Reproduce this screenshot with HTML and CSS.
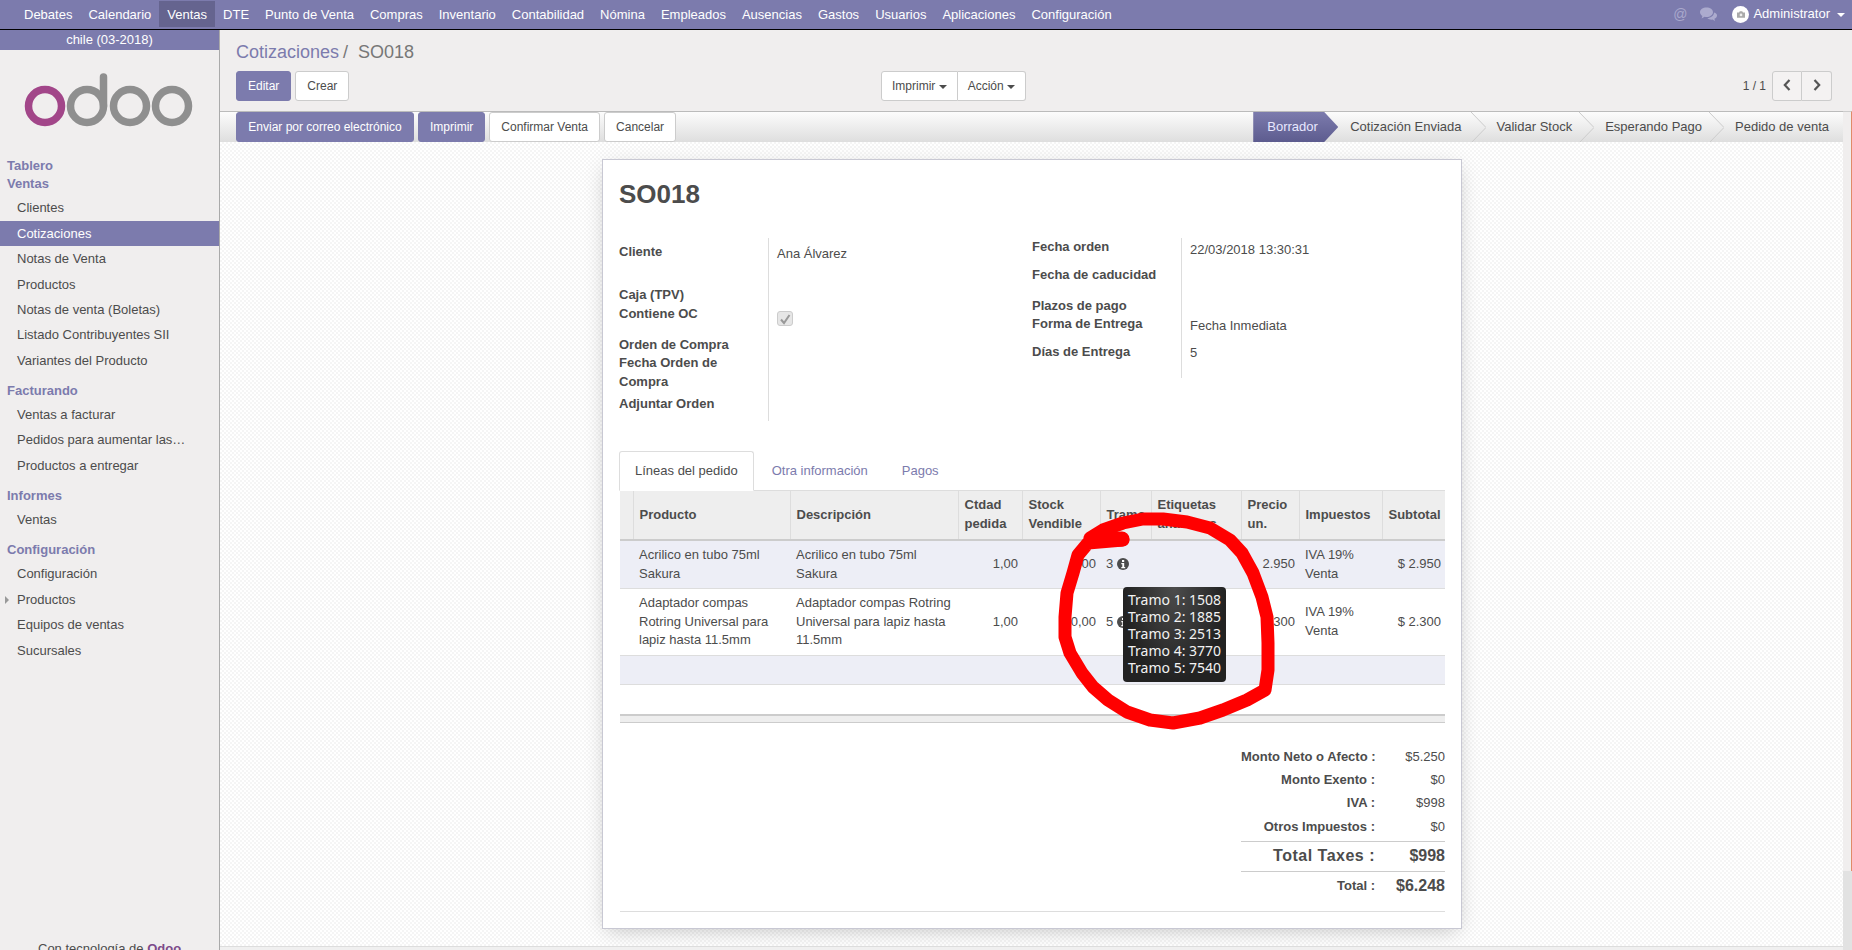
FILE: index.html
```html
<!DOCTYPE html>
<html lang="es">
<head>
    <meta charset="UTF-8">
    <title>SO018 - Odoo</title>
    <link rel="stylesheet" href="styles.css">
</head>
<body>

<nav class="topbar">
    <ul class="topmenu">
        <li>Debates</li>
        <li>Calendario</li>
        <li class="active">Ventas</li>
        <li>DTE</li>
        <li>Punto de Venta</li>
        <li>Compras</li>
        <li>Inventario</li>
        <li>Contabilidad</li>
        <li>Nómina</li>
        <li>Empleados</li>
        <li>Ausencias</li>
        <li>Gastos</li>
        <li>Usuarios</li>
        <li>Aplicaciones</li>
        <li>Configuración</li>
    </ul>
    <div class="topright">
        <span class="top-at">@</span>
        <svg class="top-chat" viewBox="0 0 17 15" width="17" height="15">
            <path d="M6.5 0.5C2.9 0.5 0 2.6 0 5.2c0 1.5 1 2.8 2.4 3.7L1.6 11.5l3-1.7c.6.1 1.2.2 1.9.2 3.6 0 6.5-2.2 6.5-4.8S10.100.5 6.5.5z" fill="#acabce"/>
            <path d="M14 5.500c.1 3-2.900 5.400-6.700 5.600 1 1 2.600 1.600 4.300 1.600l.9-.1 2.500 1.400-.6-2.200c1.600-.8 2.600-2 2.600-3.400 0-1.200-1-2.300-3-2.900z" fill="#acabce"/>
        </svg>
        <span class="avatar">
            <svg viewBox="0 0 10 8" width="8" height="7"><path d="M0 1.500h2.500L3.500 0h3l1 1.500H10V8H0z" fill="#aaa"/><circle cx="5" cy="4.500" r="1.700" fill="#eee"/></svg>
        </span>
        <span class="top-user">Administrator</span>
        <span class="caret caret-white"></span>
    </div>
</nav>

<div class="layout">
    <aside class="sidebar">
        <div class="company">chile (03-2018)</div>
        <svg class="logo" viewBox="0 0 219 107" width="219" height="107">
            <circle cx="45" cy="56" r="16.500" fill="none" stroke="#a24689" stroke-width="7.500"/>
            <circle cx="87" cy="56" r="16.500" fill="none" stroke="#8f8f8f" stroke-width="7.500"/>
            <path d="M103.500 56V27" fill="none" stroke="#8f8f8f" stroke-width="7.500" stroke-linecap="round"/>
            <circle cx="130" cy="56" r="16.500" fill="none" stroke="#8f8f8f" stroke-width="7.500"/>
            <circle cx="172" cy="56" r="16.500" fill="none" stroke="#8f8f8f" stroke-width="7.500"/>
        </svg>
        <div class="menu-head">Tablero</div>
        <div class="menu-head">Ventas</div>
        <ul class="menu menu-first">
            <li>Clientes</li>
            <li class="selected">Cotizaciones</li>
            <li>Notas de Venta</li>
            <li>Productos</li>
            <li>Notas de venta (Boletas)</li>
            <li>Listado Contribuyentes SII</li>
            <li>Variantes del Producto</li>
        </ul>
        <div class="menu-head section">Facturando</div>
        <ul class="menu">
            <li>Ventas a facturar</li>
            <li>Pedidos para aumentar las…</li>
            <li>Productos a entregar</li>
        </ul>
        <div class="menu-head section">Informes</div>
        <ul class="menu">
            <li>Ventas</li>
        </ul>
        <div class="menu-head section">Configuración</div>
        <ul class="menu">
            <li>Configuración</li>
            <li class="has-sub">Productos</li>
            <li>Equipos de ventas</li>
            <li>Sucursales</li>
        </ul>
        <div class="powered">Con tecnología de <b>Odoo</b></div>
    </aside>

    <main class="main">
        <header class="control">
            <div class="breadcrumb"><a>Cotizaciones</a><span class="slash">/</span><span class="crumb-now">SO018</span></div>
            <div class="control-row">
                <div class="control-left">
                    <button class="btn primary">Editar</button>
                    <button class="btn">Crear</button>
                </div>
                <div class="btn-group">
                    <button class="btn">Imprimir <span class="caret"></span></button>
                    <button class="btn">Acción <span class="caret"></span></button>
                </div>
                <div class="pager">
                    <span class="pager-count">1 / 1</span>
                    <div class="pager-btns">
                        <button class="btn pager-btn">
                            <svg viewBox="0 0 8 12" width="8" height="12"><path d="M6.500 1L1.800 6l4.700 5" fill="none" stroke="#555" stroke-width="2.200"/></svg>
                        </button>
                        <button class="btn pager-btn">
                            <svg viewBox="0 0 8 12" width="8" height="12"><path d="M1.500 1l4.700 5-4.700 5" fill="none" stroke="#555" stroke-width="2.200"/></svg>
                        </button>
                    </div>
                </div>
            </div>
        </header>

        <div class="workspace">
            <div class="form-view">
                <div class="statusbar">
                    <div class="actions">
                        <button class="btn primary btn-send">Enviar por correo electrónico</button>
                        <button class="btn primary">Imprimir</button>
                        <button class="btn">Confirmar Venta</button>
                        <button class="btn">Cancelar</button>
                    </div>
                    <div class="steps">
                        <span class="step-current">Borrador</span>
                        <span class="step step-second">Cotización Enviada</span>
                        <svg class="chev" viewBox="0 0 15 31" width="15" height="31"><path d="M0 0l15 15.500L0 31" fill="none" stroke="#ccc"/></svg>
                        <span class="step">Validar Stock</span>
                        <svg class="chev" viewBox="0 0 15 31" width="15" height="31"><path d="M0 0l15 15.500L0 31" fill="none" stroke="#ccc"/></svg>
                        <span class="step">Esperando Pago</span>
                        <svg class="chev" viewBox="0 0 15 31" width="15" height="31"><path d="M0 0l15 15.500L0 31" fill="none" stroke="#ccc"/></svg>
                        <span class="step step-last">Pedido de venta</span>
                    </div>
                </div>

                <div class="sheet-bg">
                    <div class="sheet">
                        <h1>SO018</h1>

                        <div class="groups">
                            <div class="group group-left">
                                <div class="lbl pad5">Cliente</div><div class="val pad7">Ana Álvarez</div>
                                <div class="lbl">Caja (TPV)</div><div class="val"></div>
                                <div class="lbl">Contiene OC</div><div class="val"><span class="check">
                                    <svg viewBox="0 0 12 12" width="12" height="12"><path d="M2 6.500l3 3.500 5.500-8" fill="none" stroke="#999" stroke-width="2"/></svg>
                                </span></div>
                                <div class="lbl">Orden de Compra</div><div class="val"></div>
                                <div class="lbl">Fecha Orden de Compra</div><div class="val"></div>
                                <div class="lbl">Adjuntar Orden</div><div class="val"></div>
                            </div>
                            <div class="group group-right">
                                <div class="lbl">Fecha orden</div><div class="val pad3">22/03/2018 13:30:31</div>
                                <div class="lbl">Fecha de caducidad</div><div class="val"></div>
                                <div class="lbl">Plazos de pago</div><div class="val"></div>
                                <div class="lbl">Forma de Entrega</div><div class="val pad2">Fecha Inmediata</div>
                                <div class="lbl">Días de Entrega</div><div class="val pad1">5</div>
                            </div>
                        </div>

                        <ul class="tabs">
                            <li class="tab-active">Líneas del pedido</li>
                            <li>Otra información</li>
                            <li>Pagos</li>
                        </ul>

                        <table class="lines">
                            <colgroup>
                                <col class="c-handle"><col class="c-prod"><col class="c-desc"><col class="c-qty"><col class="c-stock">
                                <col class="c-tramo"><col class="c-tags"><col class="c-price"><col class="c-tax"><col class="c-sub">
                            </colgroup>
                            <thead>
                                <tr>
                                    <th></th>
                                    <th>Producto</th>
                                    <th>Descripción</th>
                                    <th>Ctdad pedida</th>
                                    <th>Stock Vendible</th>
                                    <th>Tramo</th>
                                    <th>Etiquetas analíticas</th>
                                    <th>Precio un.</th>
                                    <th>Impuestos</th>
                                    <th>Subtotal</th>
                                </tr>
                            </thead>
                            <tbody>
                                <tr class="odd">
                                    <td></td>
                                    <td>Acrilico en tubo 75ml Sakura</td>
                                    <td>Acrilico en tubo 75ml Sakura</td>
                                    <td class="num">1,00</td>
                                    <td class="num">0,00</td>
                                    <td class="tramo">3 <svg class="info" viewBox="0 0 12 12" width="12" height="12"><circle cx="6" cy="6" r="6" fill="#4c4c4c"/><rect x="5" y="2" width="2.200" height="2" fill="#fff"/><path d="M4.300 5h2.900v4h1v1.200H4.300V9h1V6.200h-1z" fill="#fff"/></svg></td>
                                    <td></td>
                                    <td class="num">2.950</td>
                                    <td>IVA 19% Venta</td>
                                    <td class="num">$ 2.950</td>
                                </tr>
                                <tr>
                                    <td></td>
                                    <td>Adaptador compas Rotring Universal para lapiz hasta 11.5mm</td>
                                    <td>Adaptador compas Rotring Universal para lapiz hasta 11.5mm</td>
                                    <td class="num">1,00</td>
                                    <td class="num">0,00</td>
                                    <td class="tramo">5 <svg class="info" viewBox="0 0 12 12" width="12" height="12"><circle cx="6" cy="6" r="6" fill="#4c4c4c"/><rect x="5" y="2" width="2.200" height="2" fill="#fff"/><path d="M4.300 5h2.900v4h1v1.200H4.300V9h1V6.200h-1z" fill="#fff"/></svg></td>
                                    <td></td>
                                    <td class="num">2.300</td>
                                    <td>IVA 19% Venta</td>
                                    <td class="num">$ 2.300</td>
                                </tr>
                                <tr class="odd empty"><td colspan="10"></td></tr>
                            </tbody>
                        </table>
                        <div class="table-foot"></div>

                        <div class="totals">
                            <div class="t-lbl">Monto Neto o Afecto :</div><div class="t-val">$5.250</div>
                            <div class="t-lbl">Monto Exento :</div><div class="t-val">$0</div>
                            <div class="t-lbl">IVA :</div><div class="t-val">$998</div>
                            <div class="t-lbl">Otros Impuestos :</div><div class="t-val">$0</div>
                            <div class="t-lbl t-big t-line">Total Taxes :</div><div class="t-val t-big t-line">$998</div>
                            <div class="t-lbl t-line">Total :</div><div class="t-val t-big t-line">$6.248</div>
                        </div>
                        <div class="sheet-rule"></div>
                    </div>
                </div>
                <div class="form-foot"></div>
            </div>
            <div class="scrollbar"><div class="thumb"></div></div>
        </div>
    </main>
</div>

<!-- marker circle somebody drew over the screenshot -->
<svg class="scribble" viewBox="0 0 1852 950" width="1852" height="950">
    <polyline fill="none" stroke="#ff0000" stroke-width="13" stroke-linejoin="round" stroke-linecap="round"
        points="1123,540 1088,543 1078,555 1073,573 1067,593 1065,617 1065,637 1070,653 1082,673 1093,687 1108,700 1127,712 1150,720 1173,723 1200,718 1223,710 1247,700 1265,690 1268,670 1268,643 1267,617 1262,597 1253,573 1242,553 1230,540 1210,528 1187,522 1163,519 1143,519 1123,523 1103,530 1090,538"/>
    <path d="M1092 540L1122 539" fill="none" stroke="#ff0000" stroke-width="15" stroke-linecap="round"/>
</svg>

<div class="tooltip">
    Tramo 1: 1508<br>
    Tramo 2: 1885<br>
    Tramo 3: 2513<br>
    Tramo 4: 3770<br>
    Tramo 5: 7540
</div>

</body>
</html>
```

FILE: styles.css
```css
* {
    box-sizing: border-box;
}
html, body {
    margin: 0;
    height: 950px;
    overflow: hidden;
}
body {
    font-family: "Liberation Sans", Arial, sans-serif;
    font-size: 13px;
    line-height: 18.57px;
    color: #4c4c4c;
    background: #fff;
    position: relative;
}
ul {
    list-style: none;
    margin: 0;
    padding: 0;
}

/* top bar */
.topbar {
    height: 30px;
    background: #7c7bad;
    border-bottom: 1px solid #000;
    display: flex;
    justify-content: space-between;
    color: #fff;
}
.topmenu {
    display: flex;
    padding: 1px 0 0 16px;
}
.topmenu li {
    height: 26px;
    line-height: 27px;
    padding: 0 8px;
    white-space: nowrap;
}
.topmenu .active {
    background: #65648f;
}
.topright {
    display: flex;
    align-items: center;
    padding-right: 7px;
}
.top-at {
    color: #a9a8cc;
    font-size: 14px;
    margin-right: 13px;
}
.top-chat {
    margin-right: 15px;
}
.avatar {
    width: 17px;
    height: 17px;
    border-radius: 50%;
    background: #fff;
    display: flex;
    align-items: center;
    justify-content: center;
    margin-right: 4px;
}
.top-user {
    margin-right: 7px;
}
.caret {
    display: inline-block;
    width: 0;
    height: 0;
    border-left: 4px solid transparent;
    border-right: 4px solid transparent;
    border-top: 4px solid #4c4c4c;
    vertical-align: middle;
}
.caret-white {
    border-top-color: #fff;
}

.layout {
    display: flex;
    height: 920px;
}

/* left menu */
.sidebar {
    width: 220px;
    flex: none;
    background: #f0eeee;
    border-right: 1px solid #aaa;
    overflow: hidden;
}
.company {
    height: 20px;
    line-height: 20px;
    background: #7c7bad;
    color: #fff;
    text-align: center;
}
.logo {
    display: block;
}
.menu-head {
    height: 18px;
    line-height: 18px;
    padding-left: 7px;
    font-weight: bold;
    color: #7c7bad;
}
.menu-head.section {
    margin-top: 8.500px;
}
.menu {
    margin-top: 2.400px;
}
.menu li {
    height: 25.400px;
    line-height: 25px;
    padding-left: 17px;
    white-space: nowrap;
    position: relative;
}
.menu .selected {
    background: #7c7bad;
    color: #fff;
}
.menu .has-sub::before {
    content: "";
    position: absolute;
    left: 5px;
    top: 9px;
    border-left: 4px solid #999;
    border-top: 4px solid transparent;
    border-bottom: 4px solid transparent;
}
.powered {
    margin-top: 277px;
    padding-left: 38px;
    white-space: nowrap;
}
.powered b {
    color: #7c4a8a;
}

.main {
    flex: 1;
    min-width: 0;
    display: flex;
    flex-direction: column;
}

/* control panel */
.control {
    height: 81px;
    flex: none;
    background: #f0eeee;
    padding: 9px 20px 0 16px;
}
.breadcrumb {
    font-size: 18px;
    line-height: 26px;
    height: 32px;
    white-space: nowrap;
}
.breadcrumb a {
    color: #7c7bad;
}
.slash {
    color: #777;
    margin: 0 10px 0 4px;
}
.crumb-now {
    color: #777;
}
.control-row {
    display: flex;
    align-items: center;
}
.control-left {
    width: 645px;
    display: flex;
    gap: 4px;
}
.btn {
    height: 30px;
    padding: 0 11px;
    border: 1px solid #ccc;
    border-radius: 3px;
    background: #fff;
    color: #4c4c4c;
    font-family: inherit;
    font-size: 12px;
    white-space: nowrap;
}
.btn.primary {
    background: #7c7bad;
    border-color: #7c7bad;
    color: #fff;
}
.btn-send {
    width: 178px;
}
.btn-group {
    display: flex;
}
.btn-group .btn {
    padding: 0 10px;
}
.btn-group .btn:first-child {
    border-radius: 3px 0 0 3px;
}
.btn-group .btn:last-child {
    border-radius: 0 3px 3px 0;
    border-left: 0;
}
.pager {
    margin-left: auto;
    display: flex;
    align-items: center;
}
.pager-count {
    margin-right: 6px;
    font-size: 12px;
}
.pager-btns {
    display: flex;
}
.pager-btn {
    width: 30px;
    padding: 0;
    background: #f4f2f2;
}
.pager-btn:first-child {
    border-radius: 3px 0 0 3px;
}
.pager-btn:last-child {
    border-radius: 0 3px 3px 0;
    border-left: 0;
}

.workspace {
    flex: 1;
    min-height: 0;
    display: flex;
}
.form-view {
    flex: 1;
    min-width: 0;
    display: flex;
    flex-direction: column;
}
.scrollbar {
    width: 9px;
    flex: none;
    background: #e2e2e2;
}
.thumb {
    height: 760px;
    background: #f0eeee;
    border-right: 1px solid #e08a68;
    border-top: 1px solid #ccc;
}

/* status bar */
.statusbar {
    height: 31px;
    flex: none;
    display: flex;
    justify-content: space-between;
    border-top: 1px solid #bbb;
    background: linear-gradient(#fcfcfc, #dedede);
    padding-left: 16px;
}
.actions {
    display: flex;
    gap: 4px;
}
.steps {
    display: flex;
    align-items: stretch;
    line-height: 30px;
}
.step-current {
    width: 85px;
    padding-left: 14px;
    color: #e8e8ff;
    background: linear-gradient(#7c7bad, #5d5c8f);
    clip-path: polygon(0 0, 71px 0, 100% 50%, 71px 100%, 0 100%);
}
.step {
    padding: 0 7px 0 11px;
    white-space: nowrap;
}
.step-second {
    padding: 0 9px 0 12px;
}
.step-last {
    padding-right: 14px;
}
.chev {
    flex: none;
}

/* sheet */
.sheet-bg {
    flex: 1;
    min-height: 0;
    padding: 17px 0 0 1px;
    background-color: #fff;
    background-image: repeating-conic-gradient(#f5f5f5 0 25%, #fff 0 50%);
    background-size: 4px 4px;
    overflow: hidden;
}
.sheet {
    width: 860px;
    height: 770px;
    margin: 0 auto;
    padding: 0 16px;
    background: #fff;
    border: 1px solid #c8c8d3;
    box-shadow: 0 5px 20px -5px rgba(0, 0, 0, 0.25);
}
.sheet h1 {
    margin: 0;
    padding-top: 20px;
    font-size: 26px;
    line-height: 29px;
    height: 78px;
    font-weight: bold;
}
.groups {
    display: flex;
    height: 213px;
}
.group {
    display: grid;
    grid-template-columns: 149px 1fr;
    align-content: start;
}
.group-left {
    width: 413px;
    grid-template-rows: 48px 19px 31px 18px 41px 26px;
}
.group-right {
    width: 400px;
    grid-template-rows: 28px 31px 18px 28px 35px;
}
.lbl {
    font-weight: bold;
}
.val {
    border-left: 1px solid #ddd;
    padding-left: 8px;
}
.pad1 { padding-top: 1px; }
.pad2 { padding-top: 2px; }
.pad3 { padding-top: 3px; }
.pad5 { padding-top: 5px; }
.pad7 { padding-top: 7px; }
.check {
    display: flex;
    align-items: center;
    justify-content: center;
    width: 16px;
    height: 15px;
    margin-top: 6px;
    background: #e6e6e6;
    border: 1px solid #ccc;
    border-radius: 3px;
}

.tabs {
    display: flex;
    height: 40px;
    border-bottom: 1px solid #ddd;
}
.tabs li {
    padding: 10px 15px;
    margin-right: 2px;
    height: 40px;
    border: 1px solid transparent;
    color: #7c7bad;
}
.tabs .tab-active {
    background: #fff;
    color: #4c4c4c;
    border-color: #ddd #ddd #fff;
    border-radius: 3px 3px 0 0;
}

/* order lines */
.lines {
    width: 825px;
    margin-left: 1px;
    table-layout: fixed;
    border-collapse: collapse;
}
.c-handle { width: 13px; }
.c-prod { width: 157px; }
.c-desc { width: 168px; }
.c-qty { width: 64px; }
.c-stock { width: 78px; }
.c-tramo { width: 51px; }
.c-tags { width: 90px; }
.c-price { width: 58px; }
.c-tax { width: 83px; }
.c-sub { width: 63px; }
.lines th {
    height: 49px;
    padding: 5px 6px;
    text-align: left;
    background: #eee;
    border-left: 1px solid #ddd;
    border-bottom: 2px solid #ccc;
}
.lines th:first-child {
    border-left: 0;
}
.lines td {
    padding: 5px 6px;
    border-bottom: 1px solid #ddd;
}
.lines .odd td {
    background: #edeef6;
}
.lines .num {
    text-align: right;
    padding-right: 4px;
    padding-left: 0;
    white-space: nowrap;
}
.lines .tramo {
    white-space: nowrap;
}
.info {
    vertical-align: -2px;
}
.lines .empty td {
    height: 29px;
    padding: 0;
}
.table-foot {
    width: 825px;
    margin: 29px 0 0 1px;
    height: 9px;
    background: #eee;
    border-top: 2px solid #ccc;
    border-bottom: 1px solid #ccc;
}

/* totals */
.totals {
    width: 204px;
    margin: 25px 0 0 622px;
    display: grid;
    grid-template-columns: 134px 70px;
    grid-template-rows: repeat(4, 23.300px) 30px 30px;
}
.t-lbl {
    font-weight: bold;
    text-align: right;
    white-space: nowrap;
}
.t-val {
    text-align: right;
    white-space: nowrap;
}
.t-big {
    font-size: 16px;
    font-weight: bold;
}
.t-lbl.t-big {
    letter-spacing: 0.500px;
}
.t-line {
    border-top: 1px solid #ccc;
    line-height: 27px;
}
.sheet-rule {
    width: 825px;
    margin: 10px 0 0 1px;
    border-top: 1px solid #ddd;
}

.form-foot {
    height: 4px;
    flex: none;
    background: #f0f0f0;
    border-top: 1px solid #ddd;
}

/* over the page */
.scribble {
    position: absolute;
    left: 0;
    top: 0;
    pointer-events: none;
}
.tooltip {
    position: absolute;
    left: 1123px;
    top: 587px;
    width: 103px;
    height: 95px;
    padding: 4px 5px;
    border-radius: 4px;
    background: radial-gradient(ellipse at 50% 0, #4c4c4c, #222 70%);
    color: #f2f2f2;
    font-family: "Noto Sans", sans-serif;
    font-size: 14px;
    line-height: 17px;
    white-space: nowrap;
}
```
